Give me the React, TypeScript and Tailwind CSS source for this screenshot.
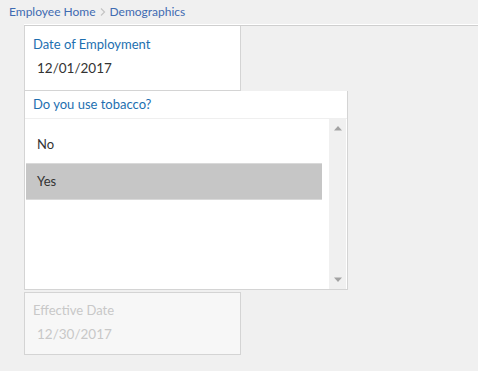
export default function App() {
  return (
    <div className="h-[371px] w-[478px] overflow-hidden bg-[#f0f0f0] font-['Lato','Liberation_Sans',sans-serif]">
      <div className="flex h-[24px] items-center pl-[9px] text-[12px] text-[#3f6bb2]">
        <span>Employee Home</span>
        <svg className="mx-[4px]" width="6" height="8" viewBox="0 0 6 8">
          <path d="M1 0.5 L4.5 4 L1 7.5" fill="none" stroke="#c4c4c4" strokeWidth="1.2" />
        </svg>
        <span>Demographics</span>
      </div>
      <div className="pl-[24px]">
        <div className="border-t border-t-white">
          <div className="border-t border-[#cfcfcf]">
            <div className="flex h-[65px] w-[217px] flex-col border-x border-b border-[#d4d4d4] bg-white pl-[8px] pt-[9px]">
              <span className="text-[13px] leading-[18px] text-[#1d6fb0]">Date of Employment</span>
              <span className="mt-[6px] pl-[4px] text-[13.5px] leading-[18px] text-[#333]">12/01/2017</span>
            </div>
            <div className="flex h-[199px] w-[324px] flex-col border-x border-b border-[#d4d4d4] bg-white">
              <div className="flex h-[28px] shrink-0 items-center border-b border-[#efefef] pl-[8px] text-[13px] text-[#1d6fb0]">
                Do you use tobacco?
              </div>
              <div className="flex min-h-0 flex-1 pl-[1px]">
                <div className="flex-1 pt-[7px]">
                  <div className="flex h-[37px] items-center pl-[11px] text-[13px] text-[#333]">No</div>
                  <div className="flex h-[37px] w-[296px] items-center border-y border-[#d9d9d9] bg-[#c6c6c6] pl-[11px] text-[13px] text-[#333]">
                    Yes
                  </div>
                </div>
                <div className="flex w-[17px] flex-col items-center justify-between bg-[#f0f0f0] py-[7px]">
                  <svg width="8" height="5" viewBox="0 0 8 5">
                    <path d="M4 0 L8 4.5 L0 4.5 Z" fill="#a3a3a3" />
                  </svg>
                  <svg width="8" height="5" viewBox="0 0 8 5">
                    <path d="M0 0.5 L8 0.5 L4 5 Z" fill="#a3a3a3" />
                  </svg>
                </div>
                <div className="w-[1px]" />
              </div>
            </div>
            <div className="mt-[2px] flex h-[63px] w-[217px] flex-col border border-[#d4d4d4] bg-[#f7f7f7] pl-[8px] pt-[8px]">
              <span className="text-[13px] leading-[18px] text-[#c8c8c8]">Effective Date</span>
              <span className="mt-[6px] pl-[4px] text-[13.5px] leading-[18px] text-[#c8c8c8]">12/30/2017</span>
            </div>
          </div>
        </div>
      </div>
    </div>
  )
}
